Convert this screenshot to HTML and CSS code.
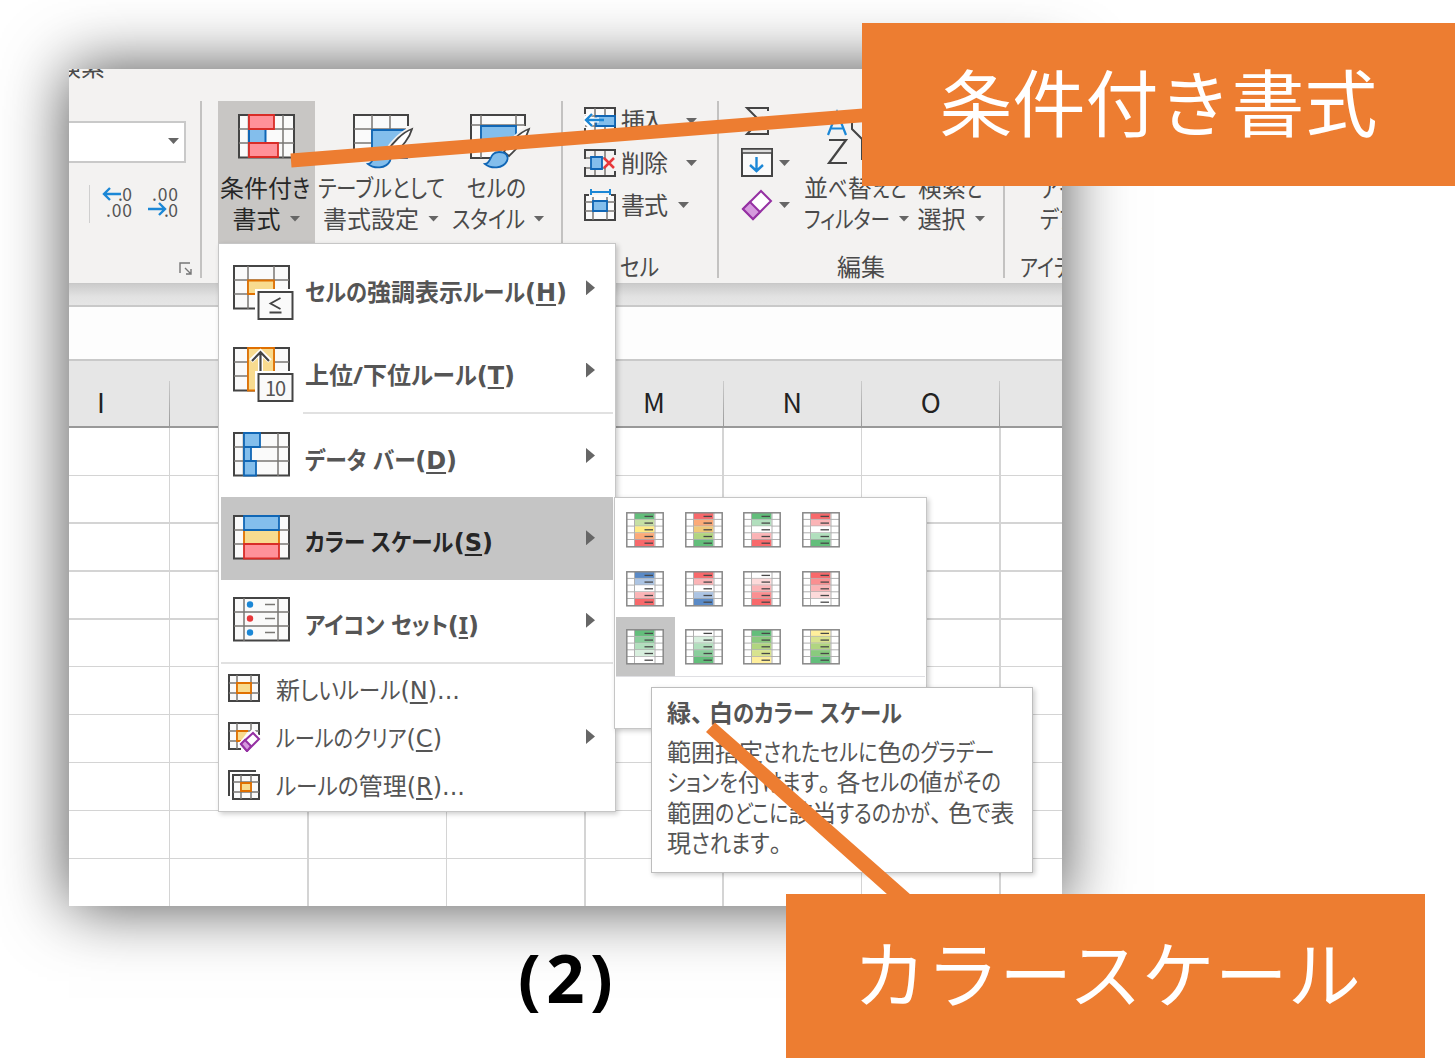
FILE: index.html
```html
<!DOCTYPE html>
<html lang="ja">
<head>
<meta charset="utf-8">
<title>条件付き書式 - カラースケール</title>
<link rel="stylesheet" href="styles.css">
</head>
<body>
<main class="page">
  <section class="frame">
    <div class="ribbon">
      <div class="tabs"><span>検索</span></div>
      <div class="groups">
        <div class="group number">
          <div class="combo"><i class="caret"></i></div>
          <div class="decimals">
            <svg width="31" height="36" viewBox="0 0 31 36"><path d="M19 9H2M8 3 2 9l6 6" class="arrow"/><text x="16" y="15.500" class="dec" textLength="14">.0</text><text x="4" y="32" class="dec" textLength="26">.00</text></svg>
            <svg width="31" height="36" viewBox="0 0 31 36"><path d="M0 24h17M11 18l6 6-6 6" class="arrow"/><text x="4" y="15.500" class="dec" textLength="26">.00</text><text x="16" y="32" class="dec" textLength="14">.0</text></svg>
          </div>
          <svg class="launcher" width="14" height="14" viewBox="0 0 14 14" fill="none" stroke="#777" stroke-width="1.4"><path d="M1 11V1h10M6 6l6 6M12 7v5H7"/></svg>
        </div>
        <div class="group styles">
          <div class="big active">
            <svg width="57" height="45" viewBox="0 0 57 45"><path class="box" d="M1 1h55v42.500H1z"/><path class="in" d="M10.500 1v43M45 1v43M1 15h55M1 29h55"/><path class="red" d="M11 1h25v14H11zM11 29h29v14H11z"/><path d="M10 16h18v12H10z" fill="#83beec"/><path d="M11 16v12M27.500 16v12" stroke="#1066b5" stroke-width="2"/></svg>
            <span data-w="90">条件付き</span>
            <span class="row"><b data-w="48">書式</b><i class="caret"></i></span>
          </div>
          <div class="big table">
            <svg width="61" height="55" viewBox="0 0 61 55"><path class="box" d="M55 12V1H1v43h25"/><path class="in" d="M19 1v43M37 1v15M1 15h52M1 29h24"/><path class="blue" d="M19 44V16h35v28z"/><path d="M60 14C50 18 38 29 32 41l6 4C48 37 57 28 60 14z" fill="#fff" stroke="#f3f2f1" stroke-width="5"/><path d="M59 15C50 18 39 29 34 38l5 4C48 33 56 26 59 15z" fill="#fff" stroke="#444" stroke-width="1.800"/><path class="blue" d="M15 50c7-1 4-12 14-12 7 0 10 4 8 9-4 8-16 8-22 3z"/></svg>
            <span data-w="127">テーブルとして</span>
            <span class="row"><b data-w="96">書式設定</b><i class="caret"></i></span>
          </div>
          <div class="big cell">
            <svg width="61" height="55" viewBox="0 0 61 55"><path class="box" d="M55 12V1H1v43h20"/><path class="in" d="M11 1v43M46 1v12M1 11h54M1 36h28"/><path class="blue" d="M11 12h35v24H11z"/><path d="M60 14C50 18 38 29 32 41l6 4C48 37 57 28 60 14z" fill="#fff" stroke="#f3f2f1" stroke-width="5"/><path d="M59 15C50 18 39 29 34 38l5 4C48 33 56 26 59 15z" fill="#fff" stroke="#444" stroke-width="1.800"/><path class="blue" d="M15 50c7-1 4-12 14-12 7 0 10 4 8 9-4 8-16 8-22 3z"/></svg>
            <span data-w="59">セルの</span>
            <span class="row"><b data-w="73">スタイル</b><i class="caret"></i></span>
          </div>
        </div>
        <div class="group cells">
          <div class="small"><svg width="33" height="30" viewBox="0 0 33 30"><path class="box" d="M1 8V2h30v26H1v-6"/><path class="in" d="M11 2v26M21 2v26M1 10h30M1 20h30"/><path class="blue" d="M12 10h19v10H12z"/><path d="M15 14H1M7 7l-6 7 6 7" fill="none" stroke="#fff" stroke-width="5"/><path class="arrow" d="M20 14H2M8 8l-6 6 6 6"/></svg><b data-w="44">挿入</b><i class="caret"></i></div>
          <div class="small"><svg width="33" height="30" viewBox="0 0 33 30"><path class="in" d="M11 2v8M21 2v8M11 20v8M21 20v8M1 10h20M1 20h20"/><path class="box hollow" d="M1 11V2h30v5M1 19v9h30v-5"/><path class="blue" d="M7 9h11v12H7z"/><path d="m20 10 10 10M30 10 20 20" stroke="#e8383b" stroke-width="2.500"/></svg><b data-w="47">削除</b><i class="caret"></i></div>
          <div class="small near"><svg width="33" height="34" viewBox="0 0 33 34"><path class="box" d="M5 7H1v25h30V7h-4"/><path class="in" d="M9 9v23M23 9v23M1 14h30M1 23h30"/><path class="blue" d="M9 13h14v10H9z"/><path class="arrow thin" d="M7 4h19M7 1v6M26 1v6"/></svg><b data-w="47">書式</b><i class="caret"></i></div>
          <span class="title" data-w="39">セル</span>
        </div>
        <div class="group editing">
          <div class="tools">
            <div class="tool"><svg width="33" height="30" viewBox="0 0 33 30"><path d="M27 5V2H6l13 13L6 28h21v-4" fill="none" stroke="#444" stroke-width="2"/></svg><i class="caret"></i></div>
            <div class="tool"><svg width="33" height="30" viewBox="0 0 33 30"><path class="box" d="M1 1h30v27H1z"/><path d="M1 1h30v4H1z" fill="#ddd" stroke="#444" stroke-width="1.500"/><path class="arrow" d="M15.500 9v14M9 17l6.500 6 6.500-6"/></svg><i class="caret"></i></div>
            <div class="tool"><svg width="33" height="32" viewBox="0 0 33 32"><path d="m2 20 18-18 10 10-18 18z" fill="#fff" stroke="#9531a3" stroke-width="2"/><path d="m2 20 7-7 10 10-7 7z" fill="#d59add" stroke="#9531a3" stroke-width="2"/></svg><i class="caret"></i></div>
          </div>
          <div class="big sort">
            <svg width="60" height="58" viewBox="4 10 60 58"><path d="M1 31 10 8l9 23M4 24.500h12" fill="none" stroke="#1b87d6" stroke-width="2.200"/><path d="M2 36h17L2 59h18" fill="none" stroke="#444" stroke-width="2.200"/><path d="M25 10v15l10 10v20h8" fill="none" stroke="#444" stroke-width="2"/></svg>
            <span data-w="102">並べ替えと</span>
            <span class="row"><b data-w="86">フィルター</b><i class="caret"></i></span>
          </div>
          <div class="big find">
            <span data-w="64">検索と</span>
            <span class="row"><b data-w="48">選択</b><i class="caret"></i></span>
          </div>
          <span class="title">編集</span>
        </div>
        <div class="group ideas">
          <div class="big"><span data-w="38">アイ</span><span data-w="38">デア</span></div>
          <span class="title" data-w="70">アイデア</span>
        </div>
      </div>
    </div>
    <div class="gap"></div>
    <div class="formula"></div>
    <div class="heads"><span>I</span><span></span><span></span><span></span><span>M</span><span>N</span><span>O</span><span></span></div>
    <div class="sheet"></div>
  </section>

  <nav class="menu">
    <div class="item"><svg width="62" height="56" viewBox="0 0 62 56"><path class="box" d="M1 1h55v42.500H1z"/><path class="in" d="M15 1v43M41 1v43M1 15h55M1 29h55"/><path class="gold" d="M15 15.500h26V29H15z"/><path d="M22 24h42v34H22z" fill="#fff"/><path class="box" d="M25.500 27h34v27h-34z"/><path d="m47.500 33-10 5.500 10 5.500M36.500 47.500h12" fill="none" stroke="#444" stroke-width="1.800"/></svg><b data-w="262">セルの強調表示ルール<em>(<u>H</u>)</em></b><i class="more"></i></div>
    <div class="item"><svg width="62" height="56" viewBox="0 0 62 56"><path class="box" d="M1 1h55v42.500H1z"/><path class="in" d="M15 1v43M41 1v43M1 15h55M1 29h55"/><path class="gold" d="M15 1h26v42.500H15z"/><path d="M27.500 26V5M18 14l9.500-9 9.500 9" fill="none" stroke="#fff" stroke-width="5"/><path d="M27.500 26V5M19 14l8.500-9 8.500 9" fill="none" stroke="#444" stroke-width="2.200"/><path d="M22 24h42v34H22z" fill="#fff"/><path class="box" d="M25.500 27h34v27h-34z"/><text x="32" y="48.500" class="ten">10</text></svg><b data-w="210">上位/下位ルール<em>(<u>T</u>)</em></b><i class="more"></i></div>
    <div class="rule inset"></div>
    <div class="item"><svg width="62" height="56" viewBox="0 0 62 56"><path class="box" d="M1 1h55v42.500H1z"/><path class="in" d="M10.500 1v43M45 1v43M1 15h55M1 29h55"/><path class="blue" d="M11 1h16v14H11zM11 15h7v14h-7zM11 29h12v14.500H11z"/></svg><b data-w="152">データ バー<em>(<u>D</u>)</em></b><i class="more"></i></div>
    <div class="item on"><svg width="62" height="56" viewBox="0 0 62 56"><path class="box" d="M1 1h55v42.500H1z"/><path class="in" d="M1 15h55M1 29h55"/><path class="gold" d="M11 15h35v14H11z"/><path class="blue" d="M11 1h35v14H11z"/><path class="red" d="M11 29h35v14.500H11z"/></svg><b data-w="188">カラー スケール<em>(<u>S</u>)</em></b><i class="more"></i></div>
    <div class="item"><svg width="62" height="56" viewBox="0 0 62 56"><path class="box" d="M1 1h55v42.500H1z"/><path class="in" d="M11 1v43M45 1v43M1 15h55M1 29h55M32 7.500h10M32 21.500h10M32 35.500h10"/><circle cx="17" cy="7.500" r="3.200" fill="#1b87d6"/><circle cx="17" cy="21.500" r="3.200" fill="#e8383b"/><circle cx="17" cy="35.500" r="3.200" fill="#1b87d6"/></svg><b data-w="174">アイコン セット<em>(<u class="serif">I</u>)</em></b><i class="more"></i></div>
    <div class="rule"></div>
    <div class="item slim"><svg width="33" height="30" viewBox="0 0 33 30"><path class="box" d="M1 1h30v26H1z"/><path class="in" d="M9 1v26M23 1v26M1 9h30M1 19h30"/><path class="gold" d="M9 9h14v10H9z"/></svg><b data-w="184">新しいルール<em>(<u>N</u>)...</em></b></div>
    <div class="item slim"><svg width="33" height="30" viewBox="0 0 33 30"><path class="box" d="M31 13V1H1v26h12"/><path class="in" d="M9 1v26M23 1v9M1 9h30M1 19h11"/><path class="gold" d="M20 9H9v10h4"/><path d="m13 22 12-12 6 7-12 12z" fill="#fff" stroke="#fff" stroke-width="5"/><path d="m13 22 12-11 6 6-12 12z" fill="#fff" stroke="#9531a3" stroke-width="2"/><path d="m13 22 4-4 6 6-4 5z" fill="#d59add" stroke="#9531a3" stroke-width="2"/></svg><b data-w="166">ルールのクリア<em>(<u>C</u>)</em></b><i class="more"></i></div>
    <div class="item slim"><svg width="33" height="30" viewBox="0 0 33 30"><path d="M1 26V1h27" fill="none" stroke="#444" stroke-width="2"/><path class="box" d="M5 5h26v24H5z"/><path class="in" d="M13 5v24M23 5v24M5 12h26M5 22h26"/><path class="gold" d="M13 13h10v8H13z"/></svg><b data-w="189">ルールの管理<em>(<u>R</u>)...</em></b></div>
  </nav>

  <div class="gallery">
    <div class="swatches" id="swatches"></div>
  </div>

  <aside class="tip">
    <h2 data-w="235">緑<s>、</s>白のカラー スケール</h2>
    <p data-w="328">範囲指定されたセルに色のグラデー</p>
    <p data-w="331">ションを付けます<s>。</s>各セルの値がその</p>
    <p data-w="347">範囲のどこに該当するのかが<s>、</s>色で表</p>
    <p data-w="112">現されます。</p>
  </aside>

  <svg class="leaders" width="1455" height="1064"><path d="M290.500 153.500 863 108.500v13.700L291.500 167.500zM715 722.500 911 895h-23L706 732z" fill="#ed7d31"/></svg>
  <div class="callout first"><span>条件付き書式</span></div>
  <div class="callout second"><span>カラースケール</span></div>
  <div class="figure">(2)</div>
</main>
<script src="script.js"></script>
</body>
</html>
```
FILE: styles.css
```css
* { box-sizing: border-box; }
body { margin: 0; background: #fff; }
b, i, em { font-weight: inherit; font-style: normal; }
svg { display: block; flex: none; }

.page {
  position: relative;
  width: 1455px;
  height: 1064px;
  overflow: hidden;
  padding: 69px;
  font-family: "Noto Sans", "Noto Sans CJK JP", sans-serif;
  font-size: 24px;
  color: #4a4a4a;
  white-space: nowrap;
}
[data-w] { font-feature-settings: "palt"; }
.kana { display: inline-block; transform-origin: 0 50%; }

.frame {
  width: 993px;
  height: 837px;
  display: flex;
  flex-direction: column;
  overflow: hidden;
  background: #fff;
  box-shadow: 0 0 62px rgba(0, 0, 0, .7);
}

/* icon strokes */
.box { fill: #fafafa; stroke: #444; stroke-width: 2; }
.hollow { fill: none; }
.in { fill: none; stroke: #797774; stroke-width: 1.5; }
.blue { fill: #83beec; stroke: #1066b5; stroke-width: 1.8; }
.red { fill: #ff9199; stroke: #d92c27; stroke-width: 1.8; }
.gold { fill: #f8db8f; stroke: #e07000; stroke-width: 1.8; }
.arrow { fill: none; stroke: #1b87d6; stroke-width: 2.4; }
.thin { stroke-width: 2; }
.dec { font-size: 17.5px; fill: #555; font-family: "Noto Sans CJK JP", sans-serif; }
.ten { font-size: 20px; font-weight: 400; letter-spacing: -1px; fill: #555; font-family: "Noto Sans CJK JP", sans-serif; }
.caret { flex: none; width: 11px; height: 6px; background: #666; clip-path: polygon(0 0, 100% 0, 50% 100%); }
.more { flex: none; width: 9px; height: 15px; background: #666; clip-path: polygon(0 0, 100% 50%, 0 100%); }

/* ribbon */
.ribbon { height: 214px; background: #f3f2f1; }
.tabs { display: flex; height: 32px; overflow: hidden; }
.tabs span { height: 24px; line-height: 24px; margin: -14px 0 0 -12px; }
.groups { display: flex; height: 177px; }
.group { display: flex; position: relative; flex: none; border-right: 2px solid #c3c2c1; }
.title { position: absolute; bottom: -6px; line-height: 34px; }

.number { width: 133px; flex-direction: column; padding-top: 20px; }
.combo { width: 117px; height: 42px; border: 2px solid #c9c9c9; border-left: 0; background: #fff; display: flex; align-items: center; justify-content: flex-end; padding: 0 5px 2px 0; }
.decimals { display: flex; gap: 15px; margin: 22px 0 0 20px; height: 38px; padding-left: 12px; border-left: 1px solid #cfcfcf; }
.launcher { margin: 39px 0 0 110px; }

.styles { width: 361px; padding-left: 16px; }
.big { display: flex; flex-direction: column; align-items: center; line-height: 31px; height: 142px; padding-top: 13px; }
.big svg { height: 58px; }
.big svg[height="55"] { height: 55px; margin: 0 0 3px; }
.big svg[height="45"] { height: 45px; margin-bottom: 13px; }
.row { display: flex; align-items: center; gap: 9px; }
.active { width: 97px; background: #c8c6c4; color: #262626; }
.active > [data-w] { margin-right: 3px; }
.table { width: 132px; }
.table svg, .cell svg { position: relative; left: 2px; }
.cell { width: 102px; }
.cell > [data-w], .find > [data-w], .sort > [data-w] { margin-right: 3px; }

.cells { width: 156px; flex-direction: column; padding-left: 21px; }
.small, .tool { display: flex; align-items: center; height: 42px; }
.small { gap: 4px; position: relative; top: -1px; }
.small b { width: 48px; margin-top: -3px; }
.small .caret { margin-left: 13px; }
.near .caret { margin-left: 5px; }
.cells .title { left: 57px; }

.editing { width: 286px; }
.tools { width: 85px; padding-left: 22px; margin-top: -1px; }
.tool { gap: 5px; }
.sort { width: 105px; }
.sort svg { margin-left: 8px; overflow: visible; }
.find { width: 91px; padding-top: 71px; margin-left: -3px; }
.editing .title { left: 118px; }

.ideas { width: 100px; border: 0; }
.ideas .big { padding: 71px 0 0 35px; align-items: flex-start; }
.ideas .title { left: 15px; }

/* worksheet */
.gap { height: 22px; flex: none; background: linear-gradient(#cbcbcb, #e2e2e2 60%, #e6e6e6); border-top: 1px solid #c8c8c8; }
.formula { height: 54px; flex: none; background: #fdfdfd; border-top: 2px solid #c9c9c9; }
.heads {
  height: 69px; flex: none; display: grid;
  grid-template-columns: 101px repeat(7, 138.4px);
  background: #e6e6e6; border-top: 2px solid #c9c9c9; border-bottom: 2px solid #999;
  font: 27px/42px "Noto Sans CJK JP", sans-serif; color: #222; text-align: center;
}
.heads span { margin-top: 20px; border-right: 1.5px solid; border-image: linear-gradient(#ccc, #999) 1; }
.heads span:first-child { padding-right: 36px; }
.sheet {
  flex: 1;
  background:
    repeating-linear-gradient(to bottom, transparent 0 46.600px, #d4d4d4 46.600px 47.900px),
    repeating-linear-gradient(to right, transparent 0 136.900px, #d4d4d4 136.900px 138.400px) -37px 0 / 1200px 100%;
}

/* drop-down menu */
.menu {
  position: absolute; left: 218px; top: 243px; width: 398px; height: 569px;
  padding: 3px 2px 0; background: #fff; border: 1.500px solid #c6c6c6;
  box-shadow: 2px 2px 5px rgba(0, 0, 0, .2); color: #555;
}
.item { display: flex; align-items: center; height: 82.400px; padding: 0 18px 0 12px; font-weight: 700; }
.item svg { margin: 9px 10px 0 0; }
.item b { margin-top: 5px; }
.item .more { margin: -1px 0 0 auto; }
.item em { font-family: "DejaVu Sans", sans-serif; }
.on { background: #c5c5c5; color: #262626; }
.rule { height: 2px; background: #e1e1e1; margin-bottom: 1px; }
.inset { margin-left: 82px; }
.slim { height: 48px; padding-left: 7px; font-weight: 400; }
.slim svg { margin: 0 15px 0 0; }
.slim b { margin-top: -1px; }
.serif { font-family: "Noto Sans", sans-serif; }
u { text-decoration: underline; text-decoration-thickness: 1.500px; text-underline-offset: 3px; }

/* colour scale gallery */
.gallery {
  position: absolute; left: 614px; top: 497px; width: 313px; height: 232px;
  padding: 2px 1px; background: #fff; border: 1.500px solid #c6c6c6; box-shadow: 2px 2px 5px rgba(0, 0, 0, .2);
}
.swatches { display: grid; grid-template: repeat(3, 58.600px) / repeat(4, 58.600px); border-bottom: 1.500px solid #dfdfe3; }
.swatch { padding: 12px 0 0 10px; }
.picked { background: #c5c5c5; }

.tip {
  position: absolute; left: 651px; top: 687px; width: 382px; height: 186px;
  padding: 10px 15px; background: #fff; border: 1.500px solid #bdbdbd;
  box-shadow: 2px 2px 5px rgba(0, 0, 0, .2); color: #555;
}
.tip h2, .tip p { margin: 0; width: max-content; font-size: 24px; line-height: 30.600px; }
.tip h2 { margin-bottom: 8px; }
.tip s { text-decoration: none; padding-right: 6px; }

/* annotations */
.leaders { position: absolute; left: 0; top: 0; }
.callout {
  position: absolute; display: flex; align-items: center; justify-content: center;
  background: #ed7d31; color: #fff; font-size: 73px; line-height: 100px; padding-bottom: 4px;
}
.first { left: 862px; top: 23px; width: 593px; height: 163px; }
.second { left: 786px; top: 894px; width: 639px; height: 164px; padding: 0 0 5px 3px; }
.figure { position: absolute; left: 518px; top: 932px; font-size: 67px; line-height: 90px; font-weight: 700; letter-spacing: 5.500px; color: #000; }
```
FILE: script.js
```js
// Colour scales, top row to bottom row of each swatch.
const scales = [
  ['#63be7b', '#c6e0a4', '#ffeb84', '#fcaa78', '#f8696b'],
  ['#f8696b', '#fcaa78', '#f0c878', '#b1d580', '#63be7b'],
  ['#63be7b', '#b1dfbd', '#fff', '#fbb4b6', '#f8696b'],
  ['#f8696b', '#fbb4b6', '#fff', '#b1dfbd', '#63be7b'],
  ['#5a8ac6', '#acc4e3', '#fff', '#fbb4b6', '#f8696b'],
  ['#f8696b', '#fbb4b6', '#fff', '#acc4e3', '#5a8ac6'],
  ['#fff', '#fddada', '#fbb4b6', '#fa8f91', '#f8696b'],
  ['#f8696b', '#fa8f91', '#fbb4b6', '#fddada', '#fff'],
  ['#63be7b', '#8ace9c', '#b1dfbd', '#d8efde', '#fff'],
  ['#fff', '#d8efde', '#b1dfbd', '#8ace9c', '#63be7b'],
  ['#63be7b', '#8aca7e', '#b1d580', '#d8e38e', '#ffef9c'],
  ['#ffef9c', '#d8e38e', '#b1d580', '#8aca7e', '#63be7b'],
];
document.getElementById('swatches').innerHTML = scales.map((colors, n) => {
  const rows = colors.map((c, i) => {
    const y = 1 + i * 6.7;
    return `<rect x="9" y="${y}" width="19.500" height="6.500" fill="${c}"/>` +
      (i < 4 ? `<path d="M1 ${y + 6.4}H37" stroke="#b0b0b0" stroke-width="1"/>` : '') +
      `<path d="M18.500 ${y + 3.400}h8.500" stroke="#484848" stroke-width="1.300"/>`;
  }).join('');
  return `<div class="swatch${n === 8 ? ' picked' : ''}"><svg width="38" height="36" viewBox="0 0 38 36">` +
    `<rect x="1" y="1" width="36" height="34" fill="#fff"/>${rows}` +
    `<path d="M8.500 1v34M29 1v34" stroke="#b0b0b0" stroke-width="1"/>` +
    `<rect x=".8" y=".8" width="36.400" height="34" fill="none" stroke="#888" stroke-width="1.500"/></svg></div>`;
}).join('');

const KANA = /[\u3040-\u30ff]/;
const widthOf = (node) => {
  const range = document.createRange();
  range.selectNodeContents(node);
  return range.getBoundingClientRect().width;
};
function fit(el) {
  const diff = el.dataset.w - widthOf(el);
  if (!KANA.test(el.textContent)) {
    el.style.letterSpacing = diff / (el.textContent.length - 1) + 'px';
    return;
  }
  const runs = [];
  [...el.childNodes].filter((n) => n.nodeType === 3).forEach((node) => {
    const parts = node.data.split(/([\u3040-\u30ff]+)/).filter(Boolean).map((text) => {
      if (!KANA.test(text)) return text;
      const run = document.createElement('span');
      run.className = 'kana';
      run.textContent = text;
      runs.push(run);
      return run;
    });
    node.replaceWith(...parts);
  });
  const widths = runs.map(widthOf);
  const scale = 1 + diff / widths.reduce((a, b) => a + b, 0);
  runs.forEach((run, i) => {
    run.style.width = widths[i] * scale + 'px';
    run.style.transform = `scaleX(${scale})`;
  });
}
document.fonts.ready.then(() => document.querySelectorAll('[data-w]').forEach(fit));
```
